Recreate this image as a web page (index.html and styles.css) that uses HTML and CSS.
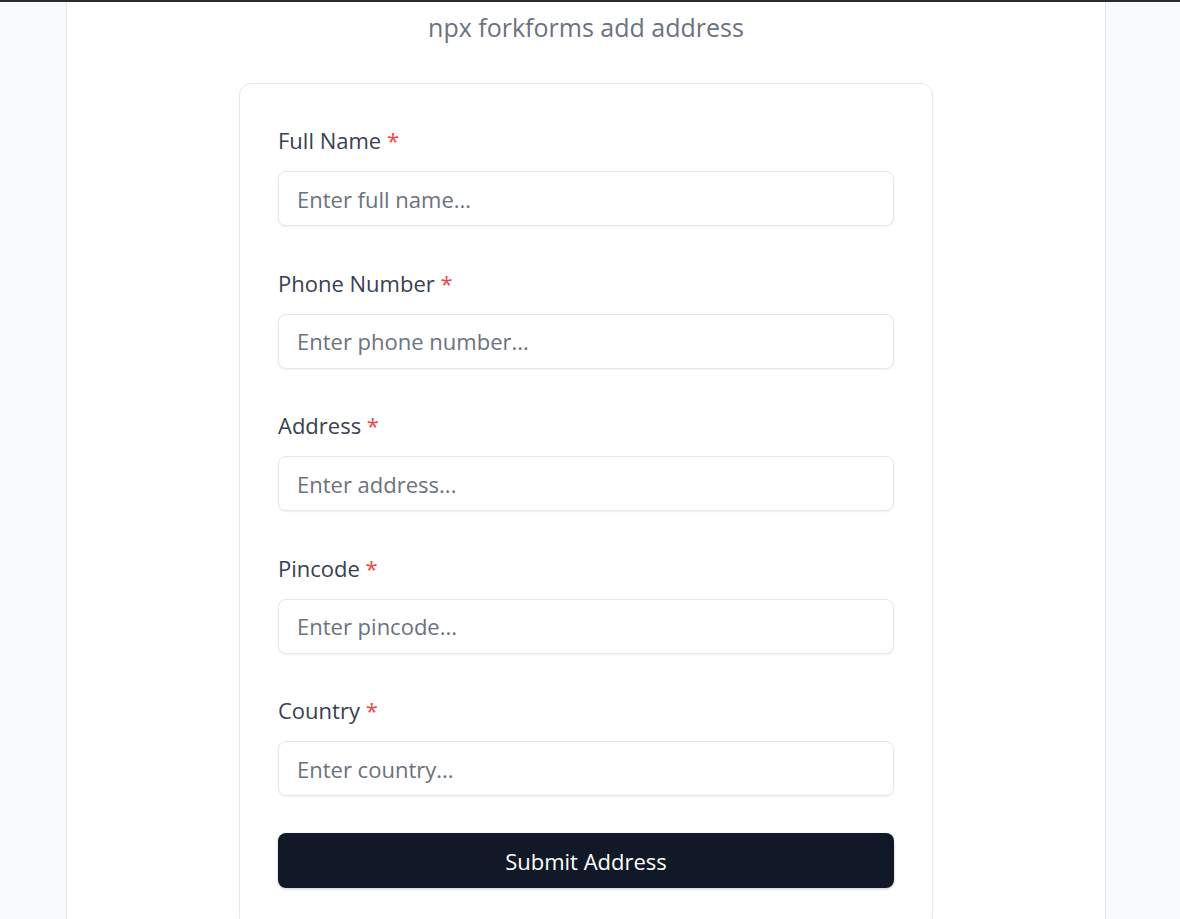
FILE: index.html
```html
<!DOCTYPE html>
<html lang="en">
<head>
<meta charset="utf-8">
<title>Add address</title>
<link rel="stylesheet" href="styles.css">
</head>
<body>
<div class="topbar"></div>
<main class="panel">
  <h1 class="title">npx forkforms add address</h1>
  <form class="card">
    <div class="field">
      <label class="label" for="fullname">Full Name <span class="req">*</span></label>
      <input class="input" id="fullname" type="text" placeholder="Enter full name...">
    </div>
    <div class="field">
      <label class="label" for="phone">Phone Number <span class="req">*</span></label>
      <input class="input" id="phone" type="text" placeholder="Enter phone number...">
    </div>
    <div class="field">
      <label class="label" for="address">Address <span class="req">*</span></label>
      <input class="input" id="address" type="text" placeholder="Enter address...">
    </div>
    <div class="field">
      <label class="label" for="pincode">Pincode <span class="req">*</span></label>
      <input class="input" id="pincode" type="text" placeholder="Enter pincode...">
    </div>
    <div class="field">
      <label class="label" for="country">Country <span class="req">*</span></label>
      <input class="input" id="country" type="text" placeholder="Enter country...">
    </div>
    <button class="submit" type="button">Submit Address</button>
  </form>
</main>
</body>
</html>
```
FILE: styles.css
```css
* { box-sizing: border-box; }

html, body {
  margin: 0;
  padding: 0;
  height: 100%;
}

body {
  background: #f9fafb;
  font-family: "Open Sans", "Noto Sans", sans-serif;
  color: #1f2937;
  overflow: hidden;
}

.topbar {
  height: 2px;
  background: #2b2b2b;
}

.panel {
  margin-left: 66px;
  width: 1040px;
  min-height: 915px;
  background: #ffffff;
  border-left: 1px solid #e5e7eb;
  border-right: 1px solid #e5e7eb;
  display: flex;
  flex-direction: column;
  align-items: center;
  padding-top: 9px;
}

.title {
  margin: 0 0 40px 0;
  font-size: 25px;
  line-height: 32px;
  font-weight: 400;
  color: #6b7280;
}

.card {
  width: 694px;
  border: 1px solid #e5e7eb;
  border-radius: 12px;
  padding: 42px 38px 40px 38px;
  display: flex;
  flex-direction: column;
  gap: 42.5px;
  background: #ffffff;
}

.field {
  display: flex;
  flex-direction: column;
  gap: 17px;
}

.label {
  font-size: 22px;
  line-height: 28px;
  font-weight: 500;
  color: #374151;
}

.req {
  color: #ef4444;
}

.input {
  height: 55px;
  width: 100%;
  border: 1px solid #e5e7eb;
  border-radius: 8px;
  padding: 0 18px;
  font-family: inherit;
  font-size: 22px;
  color: #111827;
  background: #ffffff;
  box-shadow: 0 1px 2px rgba(0, 0, 0, 0.06);
  outline: none;
}

.input::placeholder {
  color: #6b7280;
}

.submit {
  margin-top: -5.5px;
  height: 55px;
  width: 100%;
  border: none;
  border-radius: 8px;
  background: #111827;
  color: #ffffff;
  font-family: inherit;
  font-size: 22px;
  font-weight: 400;
  box-shadow: 0 1px 3px rgba(0, 0, 0, 0.2);
}
```
